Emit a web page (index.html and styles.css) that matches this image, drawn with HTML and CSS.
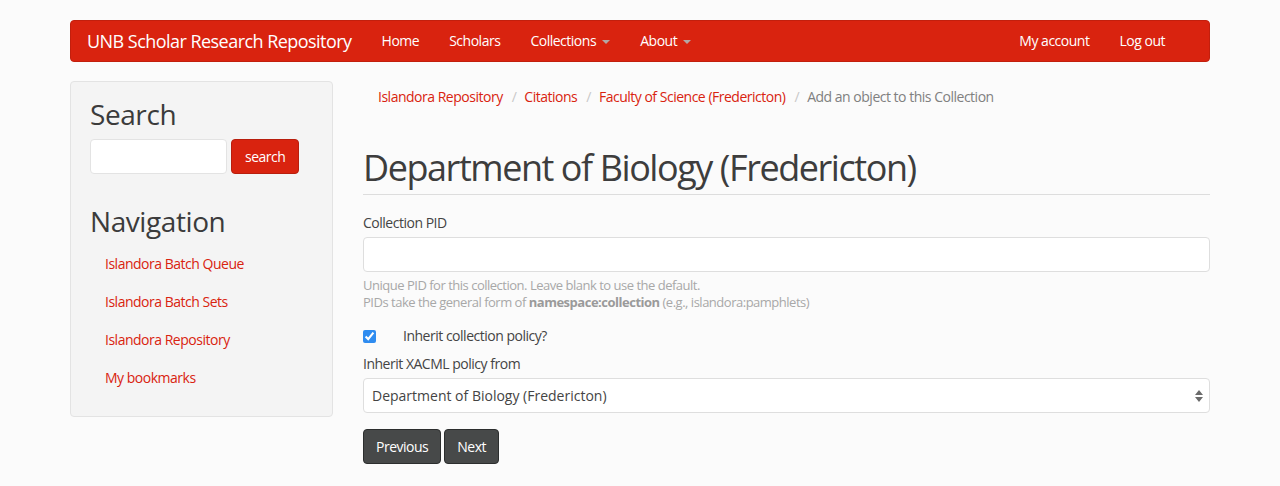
FILE: index.html
```html
<!DOCTYPE html>
<html lang="en">
<head>
<meta charset="utf-8">
<title>Department of Biology (Fredericton)</title>
<link rel="stylesheet" href="styles.css">
</head>
<body>
<div class="container">
  <nav class="navbar">
    <a class="brand" href="#">UNB Scholar Research Repository</a>
    <ul class="nav">
      <li><a href="#">Home</a></li>
      <li><a href="#">Scholars</a></li>
      <li><a href="#">Collections <span class="caret"></span></a></li>
      <li><a href="#">About <span class="caret"></span></a></li>
    </ul>
    <ul class="nav nav-right">
      <li><a href="#">My account</a></li>
      <li><a href="#">Log out</a></li>
    </ul>
  </nav>

  <div class="row">
    <aside class="sidebar">
      <div class="well">
        <h2 class="block-title">Search</h2>
        <form class="search-form">
          <input type="text" class="search-input" aria-label="Search">
          <button type="button" class="btn-primary">search</button>
        </form>
        <h2 class="block-title nav-title">Navigation</h2>
        <ul class="side-nav">
          <li><a href="#">Islandora Batch Queue</a></li>
          <li><a href="#">Islandora Batch Sets</a></li>
          <li><a href="#">Islandora Repository</a></li>
          <li><a href="#">My bookmarks</a></li>
        </ul>
      </div>
    </aside>

    <main class="main">
      <ol class="breadcrumb">
        <li><a href="#">Islandora Repository</a></li>
        <li><a href="#">Citations</a></li>
        <li><a href="#">Faculty of Science (Fredericton)</a></li>
        <li class="active">Add an object to this Collection</li>
      </ol>
      <h1 class="page-header">Department of Biology (Fredericton)</h1>

      <form class="form">
        <div class="form-group">
          <label class="control-label" for="pid">Collection PID</label>
          <input id="pid" type="text" class="form-control">
          <div class="help-block">Unique PID for this collection. Leave blank to use the default.<br>PIDs take the general form of <strong>namespace:collection</strong> (e.g., islandora:pamphlets)</div>
        </div>
        <div class="checkbox">
          <input id="inherit" type="checkbox" checked>
          <label for="inherit">Inherit collection policy?</label>
        </div>
        <div class="form-group xacml">
          <label class="control-label" for="xacml">Inherit XACML policy from</label>
          <div class="select-wrap">
            <select id="xacml" class="form-control select">
              <option>Department of Biology (Fredericton)</option>
            </select>
            <svg class="select-arrows" width="8" height="12" viewBox="0 0 8 12" aria-hidden="true"><path d="M4 0 L8 5 L0 5 Z M0 7 L8 7 L4 12 Z" fill="#6b6b6b"/></svg>
          </div>
        </div>
        <div class="actions">
          <button type="button" class="btn-default">Previous</button>
          <button type="button" class="btn-default">Next</button>
        </div>
      </form>
    </main>
  </div>
</div>
</body>
</html>
```
FILE: styles.css
```css
* { box-sizing: border-box; }
html, body { margin: 0; padding: 0; }
body {
  background: #fbfbfb;
  font-family: "Open Sans", "Liberation Sans", sans-serif;
  font-size: 14px;
  line-height: 20px;
  letter-spacing: -0.035em;
  color: #3b3b3b;
}
a { color: #d9230f; text-decoration: none; }

.container {
  width: 1140px;
  margin: 0 auto;
  padding-top: 20px;
}

/* Navbar */
.navbar {
  display: flex;
  align-items: center;
  height: 42px;
  background: #d9230f;
  border: 1px solid #c21f0d;
  border-radius: 4px;
  padding-left: 16px;
  padding-right: 29px;
}
.brand {
  color: #fff;
  font-size: 18px;
  line-height: 20px;
  letter-spacing: -0.03em;
  padding-right: 15px;
}
.nav {
  list-style: none;
  margin: 0;
  padding: 0;
  display: flex;
}
.nav a {
  display: block;
  color: #fff;
  padding: 10px 15px;
  line-height: 20px;
  font-size: 14px;
}
.nav-right { margin-left: auto; }
.caret {
  display: inline-block;
  width: 0;
  height: 0;
  margin-left: 3px;
  vertical-align: middle;
  border-top: 4px solid #b3a7a5;
  border-left: 4px solid transparent;
  border-right: 4px solid transparent;
}

/* Layout */
.row {
  display: flex;
  gap: 30px;
  margin-top: 19px;
}
.sidebar { width: 263px; flex: none; }
.main { flex: 1; min-width: 0; }

/* Well */
.well {
  background: #f4f4f4;
  border: 1px solid #e3e3e3;
  border-radius: 4px;
  padding: 17px 19px 19px 19px;
}
.block-title {
  margin: 0;
  font-size: 28px;
  line-height: 31px;
  font-weight: 400;
  letter-spacing: -0.015em;
  color: #3b3b3b;
}
.search-form {
  display: flex;
  gap: 4px;
  margin-top: 9px;
}
.search-input {
  width: 137px;
  height: 35px;
  border: 1px solid #e3e3e3;
  border-radius: 4px;
  background: #fff;
  font: inherit;
  padding: 6px 12px;
}
.btn-primary {
  height: 35px;
  padding: 6px 13px;
  background: #d9230f;
  border: 1px solid #b81e0d;
  border-radius: 4px;
  color: #fff;
  font: inherit;
  letter-spacing: -0.035em;
  line-height: 20px;
}
.nav-title { margin-top: 32px; }
.side-nav {
  list-style: none;
  margin: 8px 0 0;
  padding: 0;
}
.side-nav a {
  display: block;
  padding: 9px 15px;
  line-height: 20px;
}

/* Breadcrumb */
.breadcrumb {
  list-style: none;
  margin: 6px 0 0;
  padding: 0 15px;
  display: flex;
}
.breadcrumb li + li::before {
  content: "/";
  color: #c8c8c8;
  padding: 0 8px 0 9px;
}
.breadcrumb .active { color: #808080; }

.page-header {
  margin: 41px 0 0;
  font-size: 36px;
  line-height: 40px;
  font-weight: 400;
  letter-spacing: -0.04em;
  color: #3d3d3d;
  padding-bottom: 6px;
  border-bottom: 1px solid #dddddd;
}

/* Form */
.form { margin-top: 18px; }
.control-label {
  display: block;
  margin-bottom: 4px;
  font-weight: 400;
  color: #444;
}
.form-control {
  display: block;
  width: 100%;
  height: 35px;
  border: 1px solid #dedede;
  border-radius: 4px;
  background: #fff;
  font: inherit;
  color: #444;
  padding: 6px 8px;
}
.help-block {
  margin-top: 5px;
  font-size: 13px;
  line-height: 17px;
  color: #a8a8a8;
}
.help-block strong { color: #9a9a9a; font-weight: 700; }

.checkbox {
  display: flex;
  align-items: center;
  margin-top: 15px;
  height: 20px;
}
.checkbox input {
  margin: 0;
  width: 13px;
  height: 13px;
  accent-color: #2f8cf0;
}
.checkbox label { margin-left: 27px; color: #444; }

.xacml { margin-top: 8px; }

.select-wrap { position: relative; }
.select {
  appearance: none;
  -webkit-appearance: none;
}
.select-arrows {
  position: absolute;
  right: 7px;
  top: 12px;
}

.actions {
  margin-top: 16px;
  display: flex;
  gap: 3px;
}
.btn-default {
  height: 35px;
  padding: 6px 12px;
  background: #474949;
  border: 1px solid #2c2e2e;
  border-radius: 4px;
  color: #fff;
  font: inherit;
  letter-spacing: -0.035em;
  line-height: 20px;
}
```
